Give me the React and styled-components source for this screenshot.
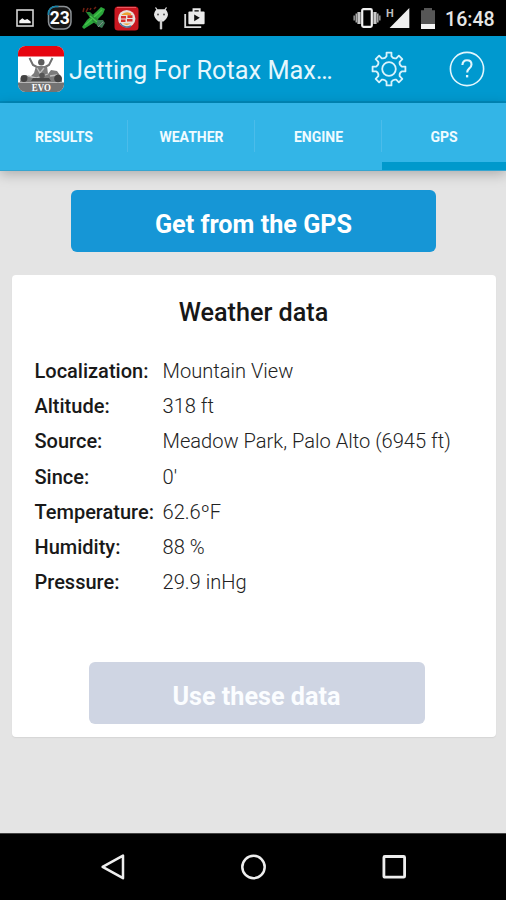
import React, { useState } from "react";
import styled, { createGlobalStyle } from "styled-components";

const tabs = ["RESULTS", "WEATHER", "ENGINE", "GPS"];

const weatherData = [
  { label: "Localization:", value: "Mountain View" },
  { label: "Altitude:", value: "318 ft" },
  { label: "Source:", value: "Meadow Park, Palo Alto (6945 ft)" },
  { label: "Since:", value: "0'" },
  { label: "Temperature:", value: "62.6ºF" },
  { label: "Humidity:", value: "88 %" },
  { label: "Pressure:", value: "29.9 inHg" },
];

// eight teeth around a ring, centered on 18,18
const gearPath = () => {
  const point = (r, deg) => {
    const a = ((deg - 90) * Math.PI) / 180;
    return `${(18 + r * Math.cos(a)).toFixed(2)} ${(18 + r * Math.sin(a)).toFixed(2)}`;
  };
  let d = "";
  for (let i = 0; i < 8; i++) {
    const c = i * 45;
    d += `${i === 0 ? "M" : "L"}${point(12.9, c - 11)}L${point(16.6, c - 8.5)}`;
    d += `L${point(16.6, c + 8.5)}L${point(12.9, c + 11)}`;
    d += `Q${point(10.8, c + 22.5)} ${point(12.9, c + 34)}`;
  }
  return d + "Z";
};

const PictureIcon = () => (
  <svg width="18" height="18" viewBox="0 0 18 18">
    <rect x="1" y="1" width="16" height="16" fill="none" stroke="#d4d4d4" strokeWidth="1.6" />
    <path d="M3.3 14.3v-2.5l3-2.5 2.5 1.8 2.5-1 3.4 2.3v1.9z" fill="#f4f4f4" />
  </svg>
);

const CounterIcon = () => (
  <svg width="26" height="26" viewBox="0 0 26 26">
    <rect x="1.5" y="1.5" width="22.5" height="22.5" rx="7" fill="#161616" stroke="#8d9296" strokeWidth="1.5" />
    <path d="M1.5 10V8.5a7 7 0 0 1 7-7h3" fill="none" stroke="#1583a8" strokeWidth="1.7" />
    <text x="12.8" y="19" textAnchor="middle" fontFamily="Roboto, sans-serif" fontWeight="700" fontSize="17.5" fill="#fff">
      23
    </text>
  </svg>
);

const PlaneIcon = () => (
  <svg width="26" height="26" viewBox="0 0 26 26">
    <path d="M2 7l1-4M5 7l2-4M9 5l1-2M13 4l2-2" stroke="#702012" strokeWidth="1.5" />
    <path d="M1 22l5-7 9-8 5-5 4 2-2 5-8 8-8 5-3 2z" fill="#2aa53a" />
    <path d="M5 7l4 0 13 12-3 3-7-5z" fill="#268a35" />
    <path d="M16 15l6 0 2 3-3 5-5-2z" fill="#3c7a55" />
    <path d="M4 20l7-6M13 12l8-7M9 11l7 6" stroke="#46c74b" strokeWidth="1.4" />
    <path d="M17 22l5-5" stroke="#7d8c86" strokeWidth="1" />
  </svg>
);

const BurgerIcon = () => (
  <svg width="25" height="25" viewBox="0 0 25 25">
    <rect x="0.5" y="0.5" width="24" height="24" rx="3.5" fill="#c91720" />
    <path d="M3 1.5h19" stroke="#ea5860" strokeWidth="1" />
    <circle cx="12.7" cy="12.7" r="8.7" fill="#e7dfdc" />
    <path d="M6 17a8 8 0 0 0 11 3" fill="none" stroke="#48779f" strokeWidth="1.5" />
    <path d="M8 8.3q5-4 9.5-.5l-.7 1.2H7.6zM9 17.5h7l2-1.5q-4 5-9 1.5z" fill="#eda02f" />
    <path d="M7 11.2h5M13.5 10.6h5M7 14.8h4.5M13 14.2h5.5" stroke="#d7302b" strokeWidth="2.6" />
  </svg>
);

const AndroidIcon = () => (
  <svg width="16" height="24" viewBox="0 0 16 24">
    <path d="M2.8 1.8l2 3M13.2 1.8l-2 3" stroke="#d8d8d8" strokeWidth="1.2" strokeLinecap="round" />
    <path d="M1 8.6Q1.6 3.6 5 3.2h6q3.4.4 4 5.4-.2 3.6-4.5 6.9h-5Q1.2 12.2 1 8.6z" fill="#e6e6e6" />
    <path d="M8 15v7.3" stroke="#cfcfcf" strokeWidth="2.4" strokeLinecap="round" />
    <circle cx="5" cy="8.4" r="1" fill="#555" />
    <circle cx="11" cy="8.4" r="1" fill="#555" />
  </svg>
);

const PlayBagIcon = () => (
  <svg width="22" height="22" viewBox="0 0 22 22">
    <path d="M1.2 7v13.2h16" fill="none" stroke="#dcdcdc" strokeWidth="1.8" />
    <path d="M9.5 5V2.2h6.2V5" fill="none" stroke="#ececec" strokeWidth="1.9" />
    <rect x="4.4" y="4.4" width="16.2" height="12.8" rx="1" fill="#ececec" />
    <path d="M10.2 7.4v6.8l5.6-3.4z" fill="#111" />
  </svg>
);

const VibrateIcon = () => (
  <svg width="28" height="22" viewBox="0 0 28 22">
    <rect x="9.2" y="2.2" width="9.6" height="17.6" rx="1.3" fill="none" stroke="#f0f0f0" strokeWidth="2.2" />
    <path d="M6 5v12M22 5v12" stroke="#c8c8c8" strokeWidth="3.2" />
    <path d="M1.2 8.5v5M26.8 8.5v5" stroke="#8c8c8c" strokeWidth="1.6" />
    <path d="M3.3 6.5v9M24.8 6.5v9" stroke="#aaa" strokeWidth="1.6" />
  </svg>
);

const SignalIcon = () => (
  <svg width="24" height="22" viewBox="0 0 24 22">
    <path d="M23.3 1v20H3.6z" fill="#eee" />
    <text x="0" y="9.5" fontFamily="Roboto, sans-serif" fontWeight="700" fontSize="11" fill="#bebebe">
      H
    </text>
  </svg>
);

const BatteryIcon = () => (
  <svg width="14" height="21" viewBox="0 0 14 21">
    <path d="M3 0h8v2.2h3V21H0V2.2h3z" fill="#565656" />
    <path d="M0 16h14v5H0z" fill="#f5f5f5" />
  </svg>
);

const KartLogo = () => (
  <svg width="46" height="46" viewBox="0 0 46 46">
    <defs>
      <clipPath id="logoShape">
        <rect width="46" height="46" rx="7.5" />
      </clipPath>
    </defs>
    <g clipPath="url(#logoShape)">
      <rect width="46" height="46" fill="#fff" />
      <rect width="46" height="10.5" fill="#e60510" />
      <path d="M11.5 12l3.5 7 6 3M34.5 12L31 19l-6 3" fill="none" stroke="#707070" strokeWidth="2" />
      <circle cx="23.3" cy="16.3" r="3.2" fill="#5c5c5c" />
      <path d="M18 20h11l1 8 3-4 6 1 5 7v4H2l1-5 5-2 4 2 4-4z" fill="#7b7b7b" />
      <path d="M19 22l3 5 4-5M10 30l8 2 12-4M32 30l7-1" stroke="#bdbdbd" strokeWidth="1.3" fill="none" />
      <path d="M15 32h16l2 3H13z" fill="#484848" />
      <circle cx="6" cy="32.5" r="3.4" fill="#424242" />
      <circle cx="40" cy="32.5" r="3.8" fill="#424242" />
      <circle cx="24" cy="29.5" r="2.8" fill="#555" />
      <rect y="36.5" width="46" height="9.5" fill="#737373" />
      <text x="23.3" y="44.6" textAnchor="middle" fontFamily="Liberation Serif, serif" fontWeight="700" fontSize="10.5" textLength="19" lengthAdjust="spacingAndGlyphs" fill="#fff">
        EVO
      </text>
    </g>
  </svg>
);

const GearIcon = () => (
  <svg width="36" height="36" viewBox="0 0 36 36" fill="none" stroke="#d9f3fc" strokeWidth="1.8" strokeLinejoin="round">
    <path d={gearPath()} />
    <circle cx="18" cy="18" r="6.8" />
  </svg>
);

const HelpIcon = () => (
  <svg width="36" height="36" viewBox="0 0 36 36" fill="none" stroke="#e1f6fd">
    <circle cx="18" cy="18" r="16.6" strokeWidth="1.6" />
    <path d="M13.4 14q.3-4.8 4.6-4.8 4.5 0 4.5 4.3 0 2.2-2.4 4.1-1.9 1.6-1.9 4" strokeWidth="2.1" />
    <path d="M18.1 24v2.4" strokeWidth="2.3" />
  </svg>
);

const App = () => {
  const [activeTab, setActiveTab] = useState("GPS");

  return (
    <Screen>
      <GlobalStyle />
      <StatusBar>
        <Notifications>
          <PictureIcon />
          <CounterIcon />
          <PlaneIcon />
          <BurgerIcon />
          <AndroidIcon />
          <PlayBagIcon />
        </Notifications>
        <SystemIcons>
          <VibrateIcon />
          <SignalIcon />
          <BatteryIcon />
          <Clock>16:48</Clock>
        </SystemIcons>
      </StatusBar>
      <Toolbar>
        <KartLogo />
        <AppTitle>Jetting For Rotax Max…</AppTitle>
        <ToolbarButton aria-label="Settings">
          <GearIcon />
        </ToolbarButton>
        <ToolbarButton aria-label="Help">
          <HelpIcon />
        </ToolbarButton>
      </Toolbar>
      <TabBar>
        {tabs.map((tab) => (
          <Tab key={tab} $active={tab === activeTab} onClick={() => setActiveTab(tab)}>
            {tab}
          </Tab>
        ))}
      </TabBar>
      <Content>
        <ActionButton $width={365}>Get from the GPS</ActionButton>
        <Card>
          <CardTitle>Weather data</CardTitle>
          <DataList>
            {weatherData.map((item) => (
              <DataRow key={item.label}>
                <Label>{item.label}</Label>
                <Value>{item.value}</Value>
              </DataRow>
            ))}
          </DataList>
          <ActionButton $width={336} disabled>
            Use these data
          </ActionButton>
        </Card>
      </Content>
      <NavBar>
        <svg width="26" height="28" viewBox="0 0 26 28" fill="none" stroke="#eee" strokeWidth="2.5">
          <path d="M24 2.6v22.6L3.6 13.9z" strokeLinejoin="round" />
        </svg>
        <svg width="26" height="28" viewBox="0 0 26 28" fill="none" stroke="#eee" strokeWidth="2.5">
          <circle cx="13.5" cy="14" r="11.2" />
        </svg>
        <svg width="26" height="28" viewBox="0 0 26 28" fill="none" stroke="#eee" strokeWidth="2.8">
          <rect x="2.9" y="3.5" width="20.7" height="20.7" rx="1" />
        </svg>
      </NavBar>
    </Screen>
  );
};

const GlobalStyle = createGlobalStyle`
  * {
    box-sizing: border-box;
  }

  body {
    margin: 0;
    font-family: Roboto, sans-serif;
  }

  svg {
    display: block;
    flex-shrink: 0;
  }
`;

const Screen = styled.div`
  display: flex;
  flex-direction: column;
  width: 506px;
  height: 900px;
  overflow: hidden;
  background: #e4e4e4;
`;

const StatusBar = styled.div`
  display: flex;
  justify-content: space-between;
  align-items: center;
  height: 36px;
  padding: 0 11px 0 16px;
  background: #000;
`;

const Notifications = styled.div`
  display: flex;
  align-items: center;

  svg:nth-child(2) {
    margin-left: 13px;
  }
  svg:nth-child(3) {
    margin-left: 8px;
  }
  svg:nth-child(4) {
    margin-left: 7px;
  }
  svg:nth-child(5) {
    margin-left: 14px;
  }
  svg:nth-child(6) {
    margin-left: 15px;
  }
`;

const SystemIcons = styled.div`
  display: flex;
  align-items: center;

  svg:nth-child(2) {
    margin-left: 5px;
  }
  svg:nth-child(3) {
    margin-left: 11px;
  }
`;

const Clock = styled.span`
  width: 50px;
  margin-left: 10px;
  padding-top: 3px;
  color: #e6e6e6;
  font-size: 19.6px;
  font-weight: 500;
  line-height: 24px;
  white-space: nowrap;
`;

const Toolbar = styled.header`
  display: flex;
  align-items: center;
  height: 67px;
  padding: 0 21px 0 18px;
  background: #0099cf;
  border-bottom: 2px solid #008abc;
`;

const AppTitle = styled.h1`
  flex: 1;
  margin: 0 0 0 5px;
  padding-top: 4px;
  color: #e6f7fd;
  font-size: 25.3px;
  font-weight: 400;
  line-height: 34px;
  white-space: nowrap;
`;

const ToolbarButton = styled.button`
  padding: 0;
  border: none;
  background: none;
  cursor: pointer;

  & + & {
    margin-left: 42px;
  }
`;

const TabBar = styled.nav`
  display: grid;
  grid-template-columns: 128px 127px 127px 124px;
  height: 68px;
  background: #33b5e7;
  border-bottom: 1px solid #36a5d0;
  box-shadow: 0 3px 12px rgba(0, 0, 0, 0.25);
`;

const Tab = styled.button`
  display: flex;
  align-items: center;
  justify-content: center;
  padding: 1px 0 0;
  border: none;
  background: ${({ $active }) =>
    $active ? "linear-gradient(#0099cc, #0099cc) bottom / 100% 8px no-repeat" : "none"};
  color: #f0fbff;
  font-family: inherit;
  font-size: 14px;
  font-weight: 700;
  cursor: pointer;

  &:not(:last-child) {
    background-image: linear-gradient(#4bbcea, #4bbcea);
    background-position: right 17px;
    background-size: 1px 32px;
    background-repeat: no-repeat;
  }
`;

const Content = styled.main`
  flex: 1;
  display: flex;
  flex-direction: column;
  align-items: center;
  padding: 19px 10px 0 11px;
`;

const ActionButton = styled.button`
  flex-shrink: 0;
  width: ${({ $width }) => $width}px;
  height: 62px;
  padding: 6px 0 0;
  border: none;
  border-radius: 6px;
  background: #1696d6;
  color: #fff;
  font-family: inherit;
  font-size: 25.2px;
  font-weight: 700;
  cursor: pointer;

  &:disabled {
    background: #cfd5e3;
    color: #fbfdff;
    cursor: default;
  }
`;

const Card = styled.section`
  display: flex;
  flex-direction: column;
  align-items: center;
  width: 484px;
  height: 462px;
  margin-top: 23px;
  padding-left: 6px;
  border-radius: 4px;
  background: #fff;
  box-shadow: 0 1px 1px #d5d5d5;
`;

const CardTitle = styled.h2`
  margin: 22px 6px 0 0;
  color: #171717;
  font-size: 25.2px;
  font-weight: 500;
  line-height: 32px;
`;

const DataList = styled.dl`
  align-self: stretch;
  margin: 25px 0 62px 17px;
`;

const DataRow = styled.div`
  display: grid;
  grid-template-columns: 128px 1fr;
  height: 35.2px;
  line-height: 35.2px;
  font-size: 20px;
`;

const Label = styled.dt`
  color: #191919;
  font-weight: 500;
  white-space: nowrap;
`;

const Value = styled.dd`
  margin: 0;
  color: #222;
  font-size: 20.1px;
  font-weight: 300;
  white-space: nowrap;
`;

const NavBar = styled.footer`
  display: flex;
  justify-content: center;
  align-items: center;
  gap: 115px;
  height: 67px;
  border-top: 1px solid #444;
  background: #000;
`;

export default App;
